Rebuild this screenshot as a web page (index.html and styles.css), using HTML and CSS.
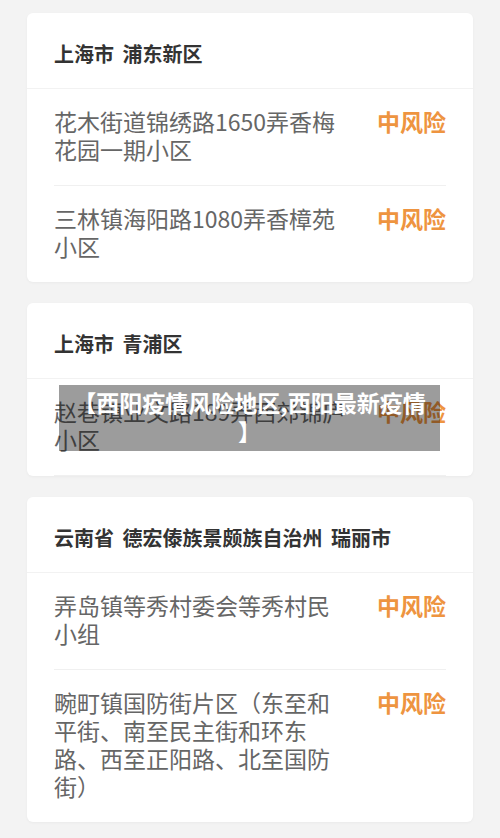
FILE: index.html
```html
<!DOCTYPE html>
<html lang="zh-CN">
<head>
    <meta charset="UTF-8">
    <meta name="viewport" content="width=device-width, initial-scale=1.0">
    <title>西阳疫情风险地区</title>
    <link rel="stylesheet" href="styles.css">
</head>
<body>

    <div class="card">
        <div class="card-title">上海市 浦东新区</div>
        <div class="row">
            <div class="place">花木街道锦绣路1650弄香梅花园一期小区</div>
            <div class="risk">中风险</div>
        </div>
        <div class="row">
            <div class="place">三林镇海阳路1080弄香樟苑小区</div>
            <div class="risk">中风险</div>
        </div>
    </div>

    <div class="card overlay-host">
        <div class="card-title">上海市 青浦区</div>
        <div class="row">
            <div class="place">赵巷镇业文路189弄西郊锦庐小区</div>
            <div class="risk">中风险</div>
        </div>
        <div class="caption">【西阳疫情风险地区,西阳最新疫情】</div>
    </div>

    <div class="card">
        <div class="card-title">云南省 德宏傣族景颇族自治州 瑞丽市</div>
        <div class="row">
            <div class="place">弄岛镇等秀村委会等秀村民小组</div>
            <div class="risk">中风险</div>
        </div>
        <div class="row">
            <div class="place">畹町镇国防街片区（东至和平街、南至民主街和环东路、西至正阳路、北至国防街）</div>
            <div class="risk">中风险</div>
        </div>
    </div>

</body>
</html>
```

FILE: styles.css
```css
body {
    margin: 0;
    padding: 13px 27px 16px;
    background-color: #f3f3f3;
    font-family: "Noto Sans CJK SC", "Noto Sans", sans-serif;
    display: flex;
    flex-direction: column;
    gap: 21px;
}
.card {
    background-color: white;
    border-radius: 6px;
    box-shadow: 0 1px 3px rgba(0, 0, 0, 0.04);
}
.card-title {
    padding: 28px 27px 21px;
    font-size: 20px;
    line-height: 26px;
    font-weight: bold;
    color: #333;
    word-spacing: 4px;
    border-bottom: 1px solid #f2f2f2;
}
.row {
    display: flex;
    justify-content: space-between;
    align-items: flex-start;
    margin: 0 27px;
    padding: 18px 0 22px;
    border-bottom: 1px solid #f0f0f0;
}
.row:last-of-type {
    border-bottom: none;
}
.place {
    width: 292px;
    font-size: 23px;
    line-height: 28px;
    color: #666;
}
.risk {
    font-size: 23px;
    line-height: 28px;
    font-weight: bold;
    color: #ee9440;
}
.overlay-host {
    position: relative;
}
.caption {
    position: absolute;
    left: 32px;
    top: 82px;
    width: 357px;
    padding: 3px 12px 5px;
    background-color: rgba(0, 0, 0, 0.39);
    color: white;
    font-size: 23px;
    line-height: 29px;
    font-weight: bold;
    text-align: center;
    line-break: anywhere;
}
```
